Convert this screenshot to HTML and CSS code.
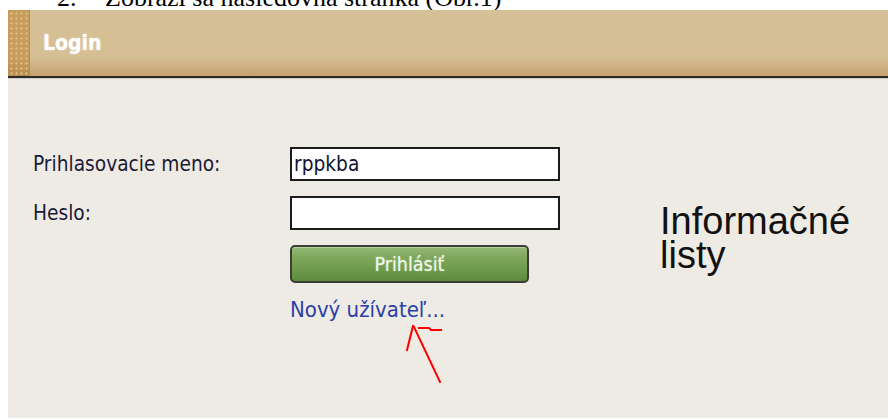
FILE: index.html
```html
<!DOCTYPE html>
<html lang="sk">
<head>
<meta charset="utf-8">
<title>Login</title>
<link rel="stylesheet" href="styles.css">
</head>
<body>
<div class="page">
  <div class="caption">
    <p class="caption-text"><span class="num">2.</span>Zobrazí sa nasledovná stránka (Obr.1)</p>
  </div>

  <section class="panel">
    <header class="bar">
      <span class="grip"></span>
      <h1 class="title">Login</h1>
    </header>

    <div class="content">
      <form class="login">
        <label class="lbl" for="user">Prihlasovacie meno:</label>
        <input class="field" id="user" type="text" value="rppkba">
        <label class="lbl" for="pass">Heslo:</label>
        <input class="field" id="pass" type="password">
        <button class="btn" type="button">Prihlásiť</button>
        <a class="new-user" href="#">Nový užívateľ...</a>
      </form>

      <div class="info">
        <span class="info-line">Informačné</span>
        <span class="info-line">listy</span>
      </div>
    </div>
  </section>

  <!-- hand-drawn red pointer under the "new user" link -->
  <svg class="arrow" width="888" height="419" viewBox="0 0 888 419">
    <g fill="none" stroke="#ff0000" stroke-width="2" stroke-linecap="square">
      <polyline points="413,326 407,350"/>
      <polyline points="414,327 440,382"/>
      <polyline points="419,328 429,328 431,330 441,330"/>
    </g>
  </svg>
</div>
</body>
</html>
```

FILE: styles.css
```css
html, body {
  margin: 0;
  padding: 0;
  background: #ffffff;
}

.page {
  position: relative;
  width: 888px;
  height: 419px;
  overflow: hidden;
}

/* document caption, mostly scrolled off above the panel */
.caption {
  height: 10px;
  overflow: hidden;
}

.caption-text {
  margin: -17px 0 0 57px;
  font-family: "Liberation Serif", "Times New Roman", serif;
  font-size: 26px;
  line-height: 30px;
  color: #000;
  white-space: nowrap;
}

.caption-text .num {
  display: inline-block;
  width: 48px;
}

/* login panel */
.panel {
  margin-left: 8px;
  height: 408px;
  background: #eeebe4;
  display: flex;
  flex-direction: column;
}

.bar {
  display: flex;
  align-items: stretch;
  height: 66px;
  background: linear-gradient(to bottom, #d6c097 0%, #d5be93 72%, #cfb082 86%, #c6a26f 100%);
  border-bottom: 2px solid #2e2b27;
}

.grip {
  width: 22px;
  background-color: #c89c5a;
  background-image:
    radial-gradient(circle at 50% 50%, #dcbd85 0.9px, rgba(220, 189, 133, 0) 1.4px),
    linear-gradient(to bottom, rgba(0, 0, 0, 0) 75%, rgba(120, 80, 30, 0.18) 100%);
  background-size: 5px 5px, 100% 100%;
  background-position: 1px 1px, 0 0;
  box-shadow: inset -1px 0 0 #b88d4d;
}

.title {
  margin: 0 0 0 13px;
  font-family: "DejaVu Sans Condensed", "DejaVu Sans", sans-serif;
  font-weight: bold;
  font-size: 21px;
  line-height: 66px;
  color: #ffffff;
  text-shadow: 0 0 2px rgba(255, 255, 255, 0.6);
}

.content {
  flex: 1;
  display: flex;
  align-items: flex-start;
  padding: 68px 0 0 25px;
  border-top: 1px solid #cdcfca;
}

.login {
  display: grid;
  grid-template-columns: 257px 270px;
  grid-auto-rows: auto;
  row-gap: 15px;
  font-family: "DejaVu Sans Condensed", "DejaVu Sans", sans-serif;
  font-size: 20.7px;
  line-height: 24px;
}

.lbl {
  align-self: center;
  color: #1b1b36;
}

.field {
  box-sizing: border-box;
  width: 270px;
  height: 34px;
  margin: 0;
  padding: 0 2px;
  border: 2px solid #1c1c1c;
  border-radius: 0;
  background: #ffffff;
  font: inherit;
  color: #141432;
  outline: none;
}

.btn {
  grid-column: 2;
  justify-self: start;
  box-sizing: border-box;
  width: 239px;
  height: 38px;
  margin: 0;
  padding: 0;
  border: 2px solid #3b3d37;
  border-radius: 5px;
  background: linear-gradient(to bottom, #95b877 0%, #7fa75c 30%, #6f9a4b 65%, #5d8a3c 100%);
  box-shadow: inset 0 1px 0 rgba(220, 240, 200, 0.45);
  font-family: "DejaVu Sans Condensed", "DejaVu Sans", sans-serif;
  font-size: 19.5px;
  color: #f2f9ec;
  text-shadow: 0 0 2px rgba(240, 255, 230, 0.5);
  cursor: pointer;
}

.new-user {
  grid-column: 2;
  justify-self: start;
  color: #2c3ea8;
  text-decoration: none;
  font-size: 22px;
}

.info {
  display: flex;
  flex-direction: column;
  margin: 57px 0 0 100px;
  font-family: "Liberation Sans", Arial, sans-serif;
  font-size: 38px;
  line-height: 34px;
  color: #121212;
}

.info-line {
  display: block;
  height: 34px;
}

/* annotation overlay */
.arrow {
  position: absolute;
  left: 0;
  top: 0;
  pointer-events: none;
}
```
